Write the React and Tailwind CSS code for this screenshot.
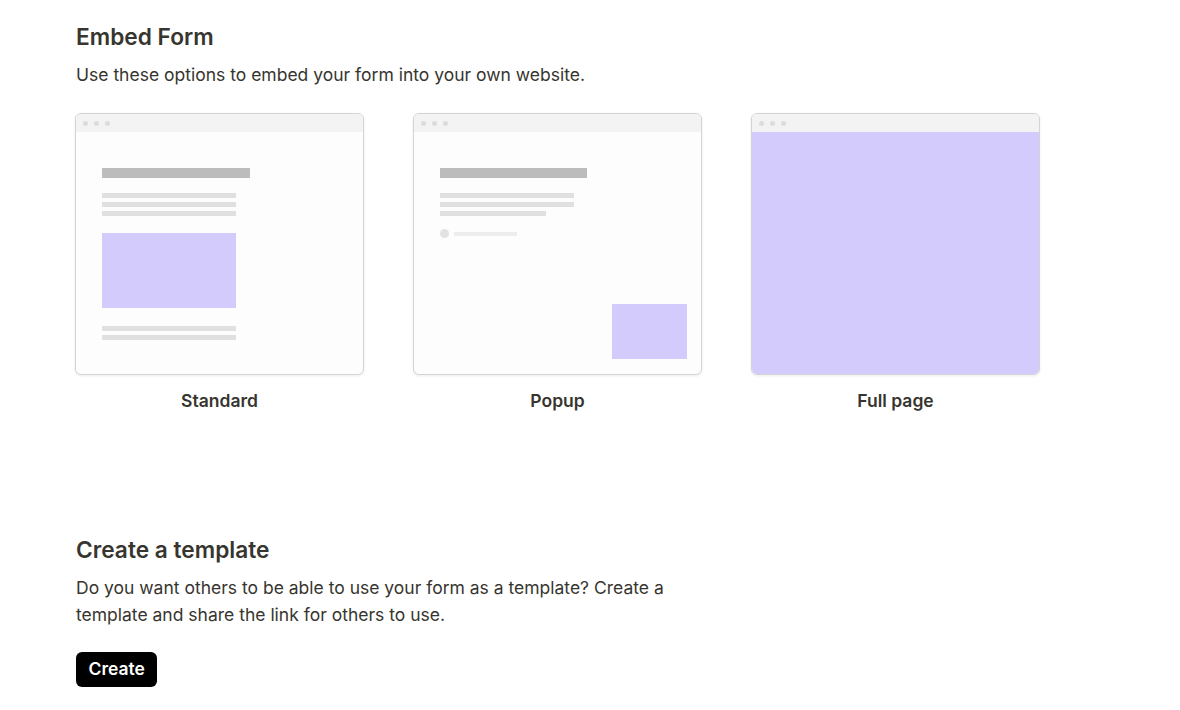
import React from "react";

function Chrome() {
  return (
    <div className="h-[18px] bg-[#f3f3f3] flex items-center gap-[6px] pl-[7px] shrink-0">
      <span className="w-[5px] h-[5px] rounded-full bg-[#dcdcdc]" />
      <span className="w-[5px] h-[5px] rounded-full bg-[#dcdcdc]" />
      <span className="w-[5px] h-[5px] rounded-full bg-[#dcdcdc]" />
    </div>
  );
}

function Card({ children, label }) {
  return (
    <div className="flex flex-col items-center">
      <div className="w-[289px] h-[262px] rounded-[6px] border border-[#d4d4d4] bg-[#fdfdfd] shadow-[0_1px_3px_rgba(0,0,0,0.08)] overflow-hidden flex flex-col">
        <Chrome />
        {children}
      </div>
      <div className="mt-[16px] text-[17.5px] leading-[20px] font-semibold text-[#37352f]">{label}</div>
    </div>
  );
}

export default function App() {
  return (
    <div className="min-h-[710px] bg-white pl-[76px] pt-[22px] text-[#37352f]" style={{ fontFamily: "Inter, 'Noto Sans', sans-serif" }}>
      <h1 className="text-[22.7px] leading-[30px] font-semibold">Embed Form</h1>
      <p className="mt-[10px] text-[17.5px] leading-[26px]">Use these options to embed your form into your own website.</p>
      <div className="mt-[25px] -ml-[1px] flex gap-[49px]">
        <Card label="Standard">
          <div className="flex-1 pl-[26px] pt-[36px] flex flex-col">
            <div className="w-[148px] h-[10px] bg-[#bcbcbc]" />
            <div className="mt-[15px] w-[134px] h-[5px] bg-[#e0e0e0]" />
            <div className="mt-[4px] w-[134px] h-[5px] bg-[#e0e0e0]" />
            <div className="mt-[4px] w-[134px] h-[5px] bg-[#e0e0e0]" />
            <div className="mt-[17px] w-[134px] h-[75px] bg-[#d3cbfc]" />
            <div className="mt-[18px] w-[134px] h-[5px] bg-[#e0e0e0]" />
            <div className="mt-[4px] w-[134px] h-[5px] bg-[#e0e0e0]" />
          </div>
        </Card>
        <Card label="Popup">
          <div className="flex-1 pl-[26px] pt-[36px] pr-[14px] pb-[15px] flex flex-col">
            <div className="w-[147px] h-[10px] bg-[#bcbcbc]" />
            <div className="mt-[15px] w-[134px] h-[5px] bg-[#e0e0e0]" />
            <div className="mt-[4px] w-[134px] h-[5px] bg-[#e0e0e0]" />
            <div className="mt-[4px] w-[106px] h-[5px] bg-[#e0e0e0]" />
            <div className="mt-[13px] flex items-center gap-[5px]">
              <div className="w-[9px] h-[9px] rounded-full bg-[#e3e3e3]" />
              <div className="w-[63px] h-[4px] bg-[#ededed]" />
            </div>
            <div className="flex-1" />
            <div className="self-end w-[75px] h-[55px] bg-[#d3cbfc]" />
          </div>
        </Card>
        <Card label="Full page">
          <div className="flex-1 bg-[#d3cbfc]" />
        </Card>
      </div>
      <h2 className="mt-[124px] text-[22.7px] leading-[30px] font-semibold">Create a template</h2>
      <p className="mt-[9px] max-w-[640px] text-[17.5px] leading-[27px]">
        Do you want others to be able to use your form as a template? Create a template and share the link for others to use.
      </p>
      <button className="mt-[24px] h-[35px] px-[12.5px] rounded-[6px] bg-black text-white text-[17.5px] font-semibold">Create</button>
    </div>
  );
}
